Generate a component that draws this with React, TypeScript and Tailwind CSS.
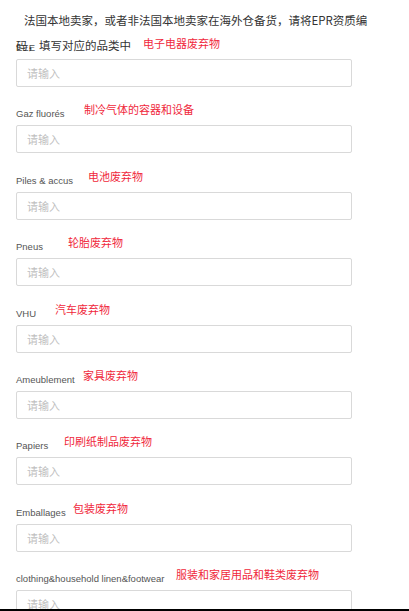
import React from 'react';

interface Field {
  label: string;
  note: string;
  noteLeft: string; // where the red annotation sits
}

const fields: Field[] = [
  { label: 'EEE', note: '电子电器废弃物', noteLeft: 'left-[143px]' },
  { label: 'Gaz fluorés', note: '制冷气体的容器和设备', noteLeft: 'left-[84px]' },
  { label: 'Piles & accus', note: '电池废弃物', noteLeft: 'left-[88px]' },
  { label: 'Pneus', note: '轮胎废弃物', noteLeft: 'left-[68px]' },
  { label: 'VHU', note: '汽车废弃物', noteLeft: 'left-[55px]' },
  { label: 'Ameublement', note: '家具废弃物', noteLeft: 'left-[83px]' },
  { label: 'Papiers', note: '印刷纸制品废弃物', noteLeft: 'left-[64px]' },
  { label: 'Emballages', note: '包装废弃物', noteLeft: 'left-[73px]' },
  { label: 'clothing&household linen&footwear', note: '服装和家居用品和鞋类废弃物', noteLeft: 'left-[176px]' },
];

const cjk = '"Noto Sans CJK SC", sans-serif';

const FieldRow: React.FC<{ field: Field }> = ({ field }) => (
  <div className="relative flex h-[66.375px] shrink-0 flex-col px-[16px]">
    <div className="flex h-[38.375px] items-end pb-[5px]">
      <span
        className="whitespace-nowrap text-[9.5px] leading-[12px] text-[#555]"
        style={{ fontFamily: '"Liberation Sans", Arial, sans-serif' }}
      >
        {field.label}
      </span>
    </div>
    <span
      className={`absolute bottom-[37px] ${field.noteLeft} whitespace-nowrap text-[11px] leading-[14px] text-[#f0283c]`}
      style={{ fontFamily: cjk }}
    >
      {field.note}
    </span>
    <input
      type="text"
      placeholder="请输入"
      style={{ fontFamily: cjk }}
      className="h-[28px] w-[336px] rounded-[2px] border border-[#d9d9d9] bg-white px-[10px] text-[11px] text-[#333] outline-none placeholder:text-[#bfbfbf]"
    />
  </div>
);

export default function App() {
  return (
    <div className="relative h-[611px] w-[409px] overflow-hidden bg-white">
      <div className="flex flex-col pt-[20.625px]">
        {fields.map((f) => (
          <FieldRow key={f.label} field={f} />
        ))}
      </div>

      {/* intro text overlaps the first label, as in the original */}
      <p
        className="absolute left-[16px] top-[8px] whitespace-nowrap text-[11.5px] leading-[25px] text-[#333]"
        style={{ fontFamily: cjk }}
      >
        <span className="pl-[8px]">法国本地卖家，或者非法国本地卖家在海外仓备货，请将EPR资质编</span>
        <br />
        <span>码，填写对应的品类中</span>
      </p>

      <div className="absolute bottom-0 left-0 h-[2px] w-full bg-black" />
    </div>
  );
}
